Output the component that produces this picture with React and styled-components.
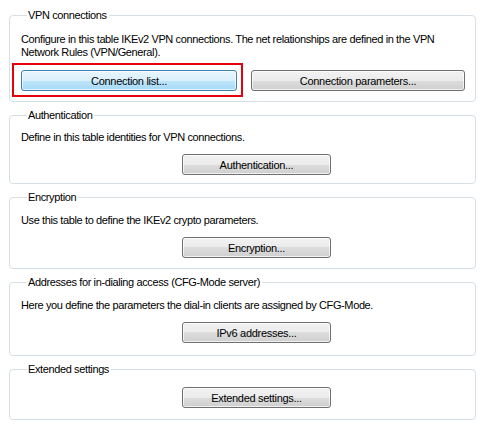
import React from 'react'
import styled, { createGlobalStyle } from 'styled-components'

const GlobalStyle = createGlobalStyle`
  html, body {
    margin: 0;
    padding: 0;
    background: #ffffff;
  }
  body {
    font-family: "Liberation Sans", Arial, sans-serif;
    font-size: 11px;
    letter-spacing: -0.38px;
    color: #000000;
  }
`

const Page = styled.div`
  width: 485px;
  height: 427px;
  padding: 9px 9px 0 9px;
  box-sizing: border-box;
  display: flex;
  flex-direction: column;
  gap: 7px;
`

const Group = styled.fieldset`
  margin: 0;
  padding: ${p => p.pad || '9px 10px 8px 11px'};
  border: 1px solid #d5dfe5;
  border-radius: 4px;
  min-width: 0;
  display: flex;
  flex-direction: column;
  gap: ${p => p.gap || 10}px;
`

const Legend = styled.legend`
  padding: 0 2px 0 1px;
  margin-left: 6px;
  line-height: 13px;
  font-size: 11px;
`

const Text = styled.p`
  margin: 0;
  line-height: 13px;
  white-space: nowrap;
`

const Row = styled.div`
  display: flex;
  gap: 14px;
  padding-left: ${p => p.indent || 0}px;
`

const Button = styled.button`
  width: ${p => p.w || 149}px;
  height: 21px;
  box-sizing: border-box;
  border: 1px solid ${p => (p.active ? '#3c7fb1' : '#707070')};
  border-radius: 3px;
  font-family: "Liberation Sans", Arial, sans-serif;
  font-size: 11px;
  letter-spacing: -0.3px;
  color: #000;
  padding: 0;
  box-shadow: inset 0 0 0 1px rgba(255, 255, 255, 0.7);
  background: ${p =>
    p.active
      ? 'linear-gradient(#eaf6fd 0%, #d9f0fc 50%, #bee6fd 50%, #a7d9f5 100%)'
      : 'linear-gradient(#f2f2f2 0%, #ebebeb 50%, #dddddd 50%, #cfcfcf 100%)'};
`

const Highlight = styled.span`
  position: relative;
  display: inline-flex;

  &::after {
    content: '';
    position: absolute;
    top: -7px;
    bottom: -6px;
    left: -9px;
    right: -6px;
    border: 2px solid #e8000b;
    pointer-events: none;
  }
`

const sections = [
  {
    title: 'Authentication',
    text: 'Define in this table identities for VPN connections.',
    button: 'Authentication...',
    pad: '9px 10px 8px 11px',
  },
  {
    title: 'Encryption',
    text: 'Use this table to define the IKEv2 crypto parameters.',
    button: 'Encryption...',
    pad: '10px 10px 10px 11px',
  },
  {
    title: 'Addresses for in-dialing access (CFG-Mode server)',
    text: 'Here you define the parameters the dial-in clients are assigned by CFG-Mode.',
    button: 'IPv6 addresses...',
    pad: '10px 10px 12px 11px',
  },
  {
    title: 'Extended settings',
    button: 'Extended settings...',
    pad: '11px 10px 11px 11px',
  },
]

export default function App() {
  return (
    <>
      <GlobalStyle />
      <Page>
        <Group pad="11px 10px 10px 11px" gap={11}>
          <Legend>VPN connections</Legend>
          <Text>
            Configure in this table IKEv2 VPN connections. The net relationships are defined in the VPN
            <br />
            Network Rules (VPN/General).
          </Text>
          <Row>
            <Highlight>
              <Button w={216} active>Connection list...</Button>
            </Highlight>
            <Button w={216}>Connection parameters...</Button>
          </Row>
        </Group>
        {sections.map(s => (
          <Group key={s.title} pad={s.pad}>
            <Legend>{s.title}</Legend>
            {s.text && <Text>{s.text}</Text>}
            <Row indent={161}>
              <Button>{s.button}</Button>
            </Row>
          </Group>
        ))}
      </Page>
    </>
  )
}
